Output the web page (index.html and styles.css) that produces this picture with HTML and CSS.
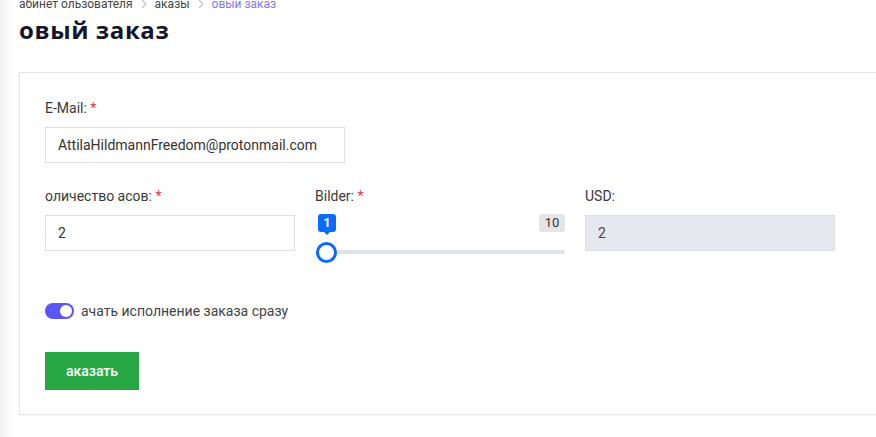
FILE: index.html
```html
<!DOCTYPE html>
<html lang="ru">
<head>
    <meta charset="UTF-8">
    <title>овый заказ</title>
    <link rel="stylesheet" href="styles.css">
</head>
<body>
    <div class="page">
        <div class="breadcrumb">
            <span>абинет ользователя</span>
            <svg class="sep" width="8" height="10" viewBox="0 0 8 10"><path d="M2 1l4 4-4 4" fill="none" stroke="#c4c4c8" stroke-width="1.2"/></svg>
            <span>аказы</span>
            <svg class="sep" width="8" height="10" viewBox="0 0 8 10"><path d="M2 1l4 4-4 4" fill="none" stroke="#c4c4c8" stroke-width="1.2"/></svg>
            <span class="active">овый заказ</span>
        </div>
        <h1>овый заказ</h1>

        <div class="card">
            <div class="field field-email">
                <label>E-Mail: <span class="req">*</span></label>
                <input class="input input-wide" type="text" value="AttilaHildmannFreedom@protonmail.com">
            </div>

            <div class="row">
                <div class="field">
                    <label>оличество асов: <span class="req">*</span></label>
                    <input class="input" type="text" value="2">
                </div>
                <div class="field">
                    <label>Bilder: <span class="req">*</span></label>
                    <div class="slider">
                        <div class="slider-labels">
                            <span class="slider-value">1</span>
                            <span class="slider-max">10</span>
                        </div>
                        <div class="slider-track">
                            <div class="slider-thumb"></div>
                        </div>
                    </div>
                </div>
                <div class="field">
                    <label>USD:</label>
                    <input class="input input-disabled" type="text" value="2" disabled>
                </div>
            </div>

            <div class="switch-row">
                <span class="switch"><span class="switch-knob"></span></span>
                <span>ачать исполнение заказа сразу</span>
            </div>

            <button class="btn-submit">аказать</button>
        </div>
    </div>
</body>
</html>
```

FILE: styles.css
```css
* {
    box-sizing: border-box;
    margin: 0;
    padding: 0;
}

body {
    font-family: Roboto, 'Liberation Sans', sans-serif;
    color: #333;
    background: linear-gradient(90deg, #f1f1f3 0, #fbfbfb 10px, #fff 17px);
    overflow: hidden;
    height: 437px;
}

.page {
    padding-left: 19px;
}

.breadcrumb {
    display: flex;
    align-items: center;
    gap: 7px;
    font-size: 12px;
    line-height: 16px;
    color: #444;
    margin-top: -4px;
}

.breadcrumb .active {
    color: #8475f5;
}

.sep {
    display: block;
}

h1 {
    font-family: 'Open Sans', Roboto, sans-serif;
    font-size: 24px;
    line-height: 30px;
    font-weight: 700;
    letter-spacing: 0.6px;
    color: #14152a;
    margin-top: 3px;
}

.card {
    margin-top: 27px;
    margin-right: -20px;
    border: 1px solid #e5e6ea;
    background: #fff;
    box-shadow: 0 1px 2px rgba(0, 0, 0, 0.04);
    padding: 25px 25px 24px;
}

.field {
    display: flex;
    flex-direction: column;
    width: 250px;
}

.field label {
    font-size: 14px;
    line-height: 20px;
    color: #3a3a3a;
    margin-bottom: 9px;
}

.req {
    color: #e0374b;
}

.field-email {
    width: 300px;
    margin-bottom: 23px;
}

.input {
    height: 36px;
    width: 100%;
    border: 1px solid #dcdfe6;
    padding: 0 12px;
    font-family: inherit;
    font-size: 14px;
    color: #333;
    background: #fff;
    outline: none;
}

.input-disabled {
    background: #e6e7ef;
    color: #444;
}

.row {
    display: flex;
    gap: 20px;
    margin-bottom: 47px;
}

.slider {
    margin-top: -1px;
}

.slider-labels {
    display: flex;
    justify-content: space-between;
    height: 18px;
    font-size: 13px;
    line-height: 18px;
}

.slider-value {
    position: relative;
    margin-left: 3px;
    width: 18px;
    text-align: center;
    background: #0b6cf9;
    color: #fff;
    font-weight: 700;
    border-radius: 3px;
}

.slider-value::after {
    content: "";
    position: absolute;
    left: 6px;
    bottom: -3px;
    border-left: 3px solid transparent;
    border-right: 3px solid transparent;
    border-top: 3px solid #0b6cf9;
}

.slider-max {
    width: 26px;
    text-align: center;
    background: #e5e5e7;
    color: #333;
    border-radius: 3px;
}

.slider-track {
    position: relative;
    margin-top: 18px;
    height: 4px;
    border-radius: 2px;
    background: #dde3ea;
}

.slider-thumb {
    position: absolute;
    left: 1px;
    top: -8px;
    width: 21px;
    height: 21px;
    border-radius: 50%;
    border: 3.5px solid #0b6cf9;
    background: #fff;
}

.switch-row {
    display: flex;
    align-items: center;
    gap: 7px;
    height: 20px;
    font-size: 14px;
    color: #444;
    margin-bottom: 31px;
}

.switch {
    display: flex;
    align-items: center;
    justify-content: flex-end;
    width: 29px;
    height: 16px;
    padding-right: 2px;
    border-radius: 8px;
    background: #5a57f5;
}

.switch-knob {
    width: 12px;
    height: 12px;
    border-radius: 50%;
    background: #fff;
}

.btn-submit {
    display: block;
    width: 94px;
    height: 38px;
    border: none;
    background: #28a745;
    color: #fff;
    font-family: inherit;
    font-size: 14px;
    font-weight: 500;
}
```
